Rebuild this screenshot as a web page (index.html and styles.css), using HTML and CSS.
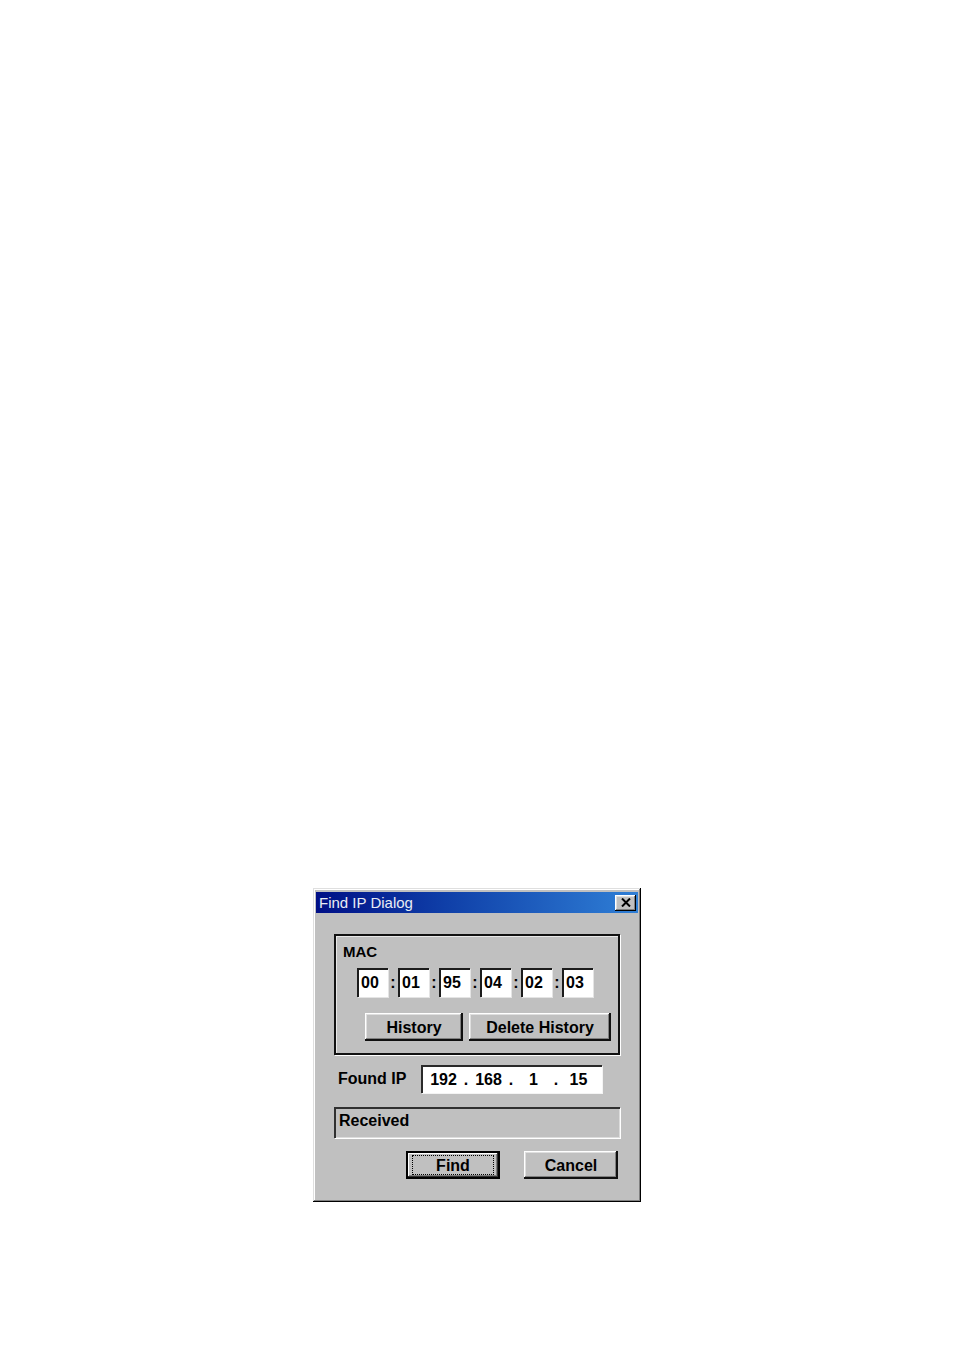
FILE: index.html
```html
<!DOCTYPE html>
<html>
<head>
<meta charset="utf-8">
<title>Find IP Dialog</title>
<link rel="stylesheet" href="styles.css">
</head>
<body>
<div class="page">
  <div class="window">
    <div class="titlebar">
      <span class="title">Find IP Dialog</span>
      <span class="close">
        <svg width="10" height="9" viewBox="0 0 10 9"><path d="M1 0.5 L9 8.5 M9 0.5 L1 8.5" stroke="#000" stroke-width="2" fill="none"/></svg>
      </span>
    </div>
    <div class="content">
      <div class="group">
        <div class="group-label">MAC</div>
        <div class="mac-row">
          <span class="field">00</span><span class="colon">:</span>
          <span class="field">01</span><span class="colon">:</span>
          <span class="field">95</span><span class="colon">:</span>
          <span class="field">04</span><span class="colon">:</span>
          <span class="field">02</span><span class="colon">:</span>
          <span class="field">03</span>
        </div>
        <div class="btn-row">
          <div class="btn btn-history">History</div>
          <div class="btn btn-delete">Delete History</div>
        </div>
      </div>
      <div class="ip-row">
        <span class="ip-label">Found IP</span>
        <div class="ip-field">
          <span class="octet">192</span><span class="dot">.</span>
          <span class="octet">168</span><span class="dot">.</span>
          <span class="octet">1</span><span class="dot">.</span>
          <span class="octet">15</span>
        </div>
      </div>
      <div class="status">Received</div>
      <div class="actions">
        <div class="btn btn-default"><span class="focus">Find</span></div>
        <div class="btn btn-cancel">Cancel</div>
      </div>
    </div>
  </div>
</div>
</body>
</html>
```
FILE: styles.css
```css
html, body {
  margin: 0;
  padding: 0;
  background: #ffffff;
}
.page {
  padding: 888px 0 0 313px;
  height: 1350px;
  box-sizing: border-box;
}
.window {
  width: 328px;
  height: 314px;
  box-sizing: border-box;
  background: #c0c0c0;
  padding: 4px 3px 3px 3px;
  box-shadow: inset -1px -1px #000, inset 1px 1px #dfdfdf, inset -2px -2px #808080, inset 2px 2px #fff;
  font-family: "Liberation Sans", Arial, sans-serif;
  font-weight: bold;
  font-size: 16px;
  color: #000;
}
.titlebar {
  height: 21px;
  display: flex;
  align-items: center;
  justify-content: space-between;
  padding: 0 2px 0 3px;
  background: linear-gradient(to right, #000f86 0%, #0f3fa8 40%, #2f7fd6 100%);
}
.title {
  font-weight: normal;
  font-size: 15px;
  color: #e8ecf4;
  line-height: 21px;
}
.close {
  width: 21px;
  height: 16px;
  box-sizing: border-box;
  background: #c0c0c0;
  display: flex;
  align-items: center;
  justify-content: center;
  box-shadow: inset -1px -1px #000, inset 1px 1px #fff, inset -2px -2px #808080, inset 2px 2px #dfdfdf;
}
.close svg {
  display: block;
}
.content {
  padding: 21px 0 0 18px;
}
.group {
  width: 286px;
  height: 121px;
  box-sizing: border-box;
  border: 2px solid #111;
  box-shadow: 1px 1px 0 #fff, inset 1px 1px 0 #e8e8e8;
  padding: 7px 0 0 7px;
}
.group-label {
  line-height: 18px;
  height: 18px;
  font-size: 15px;
}
.mac-row {
  display: flex;
  margin: 7px 0 0 14px;
  height: 29px;
}
.field {
  width: 31px;
  height: 29px;
  box-sizing: border-box;
  background: #fff;
  box-shadow: inset 2px 2px 0 #1c1c1c, 1px 1px 0 #e4e4e4;
  padding: 2px 0 0 4px;
  line-height: 26px;
}
.colon {
  width: 10px;
  text-align: center;
  line-height: 29px;
}
.btn-row {
  display: flex;
  gap: 6px;
  margin: 16px 0 0 22px;
}
.btn {
  height: 28px;
  box-sizing: border-box;
  background: #c0c0c0;
  display: flex;
  align-items: center;
  justify-content: center;
  padding-top: 1px;
  box-shadow: inset -2px -2px #101010, inset 1px 1px #fff, inset -3px -3px #808080, inset 2px 2px #dfdfdf;
}
.btn-history {
  width: 98px;
}
.btn-delete {
  width: 142px;
}
.ip-row {
  display: flex;
  align-items: center;
  margin-top: 10px;
  padding-left: 4px;
  height: 28px;
}
.ip-label {
  width: 83px;
}
.ip-field {
  width: 181px;
  height: 28px;
  box-sizing: border-box;
  background: #fff;
  box-shadow: inset 2px 2px 0 #2a2a2a, 1px 1px 0 #f4f4f4;
  display: flex;
  align-items: center;
  padding: 2px 0 0 5px;
}
.octet {
  width: 35px;
  text-align: center;
}
.dot {
  width: 10px;
  text-align: center;
}
.status {
  margin-top: 14px;
  width: 286px;
  height: 31px;
  box-sizing: border-box;
  box-shadow: inset 2px 2px 0 #303030, 1px 1px 0 #fff, inset -1px -1px 0 #dcdcdc;
  padding: 3px 0 0 5px;
  line-height: 22px;
}
.actions {
  display: flex;
  gap: 24px;
  margin: 13px 0 0 72px;
}
.btn-default,
.btn-cancel {
  width: 94px;
}
.btn-default {
  padding-top: 0;
  box-shadow: inset 0 0 0 2px #000, inset -3px -3px #303030, inset 3px 3px #fff, inset -4px -4px #808080;
}
.focus {
  width: 82px;
  height: 20px;
  box-sizing: border-box;
  border: 1px dotted #000;
  display: flex;
  align-items: center;
  justify-content: center;
  padding-top: 1px;
}
```
